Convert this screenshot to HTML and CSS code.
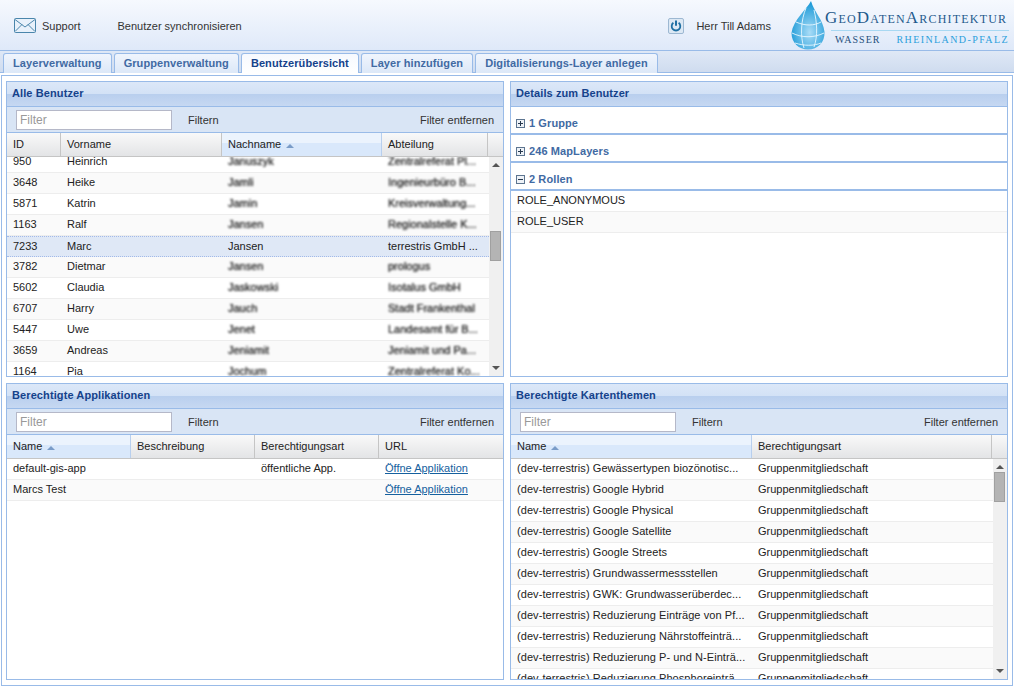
FILE: index.html
```html
<!DOCTYPE html>
<html lang="de">
<head>
  <meta charset="UTF-8">
  <title>GeoDatenArchitektur</title>
  <link rel="stylesheet" href="styles.css">
</head>
<body>
  <header class="topbar">
    <div class="top-link support">
      <svg class="mail-icon" width="22" height="15" viewBox="0 0 22 15">
        <rect x="0.5" y="0.5" width="21" height="14" rx="1" fill="#e8f1fb" stroke="#4a86ac"/>
        <path d="M1 1.5 L11 9 L21 1.5 M1 13.5 L8 6.5 M21 13.5 L14 6.5" fill="none" stroke="#4a86ac"/>
      </svg>
      <span>Support</span>
    </div>
    <div class="top-link sync">Benutzer synchronisieren</div>
    <div class="top-user">
      <div class="power-btn">
        <svg width="12" height="12" viewBox="0 0 12 12">
          <path d="M3.4 2.8 A4.3 4.3 0 1 0 8.6 2.8" fill="none" stroke="#1f6fa3" stroke-width="1.8"/>
          <path d="M6 0.6 V5.8" stroke="#1f6fa3" stroke-width="2"/>
        </svg>
      </div>
      <span>Herr Till Adams</span>
    </div>
    <div class="logo">
      <svg width="34" height="50" viewBox="0 0 34 50">
        <defs>
          <radialGradient id="drop" cx="0.55" cy="0.65" r="0.6">
            <stop offset="0" stop-color="#a9dcf7"/>
            <stop offset="1" stop-color="#1e9bd8"/>
          </radialGradient>
        </defs>
        <path d="M20 1 C16 9 2 20 0.5 33 C0.5 43 8 49.5 17 49.5 C27 49.5 34 42 33.5 32 C32.5 20 23 12 20 1 Z" fill="url(#drop)"/>
        <path d="M15 8 C10 20 9 36 13 48 M23 10 C26 22 27 36 23 47 M5 22 C14 26 23 26 30 22 M1 33 C11 38 23 38 33 33 M4 43 C13 46 23 46 30 43" fill="none" stroke="#e8f7ff" stroke-width="0.9"/>
      </svg>
      <div class="logo-text">
        <div class="logo-title">GeoDatenArchitektur</div>
        <div class="logo-line"></div>
        <div class="logo-sub">
          <span class="logo-wasser">WASSER</span>
          <span class="logo-rlp">RHEINLAND-PFALZ</span>
        </div>
      </div>
    </div>
  </header>

  <nav class="tabs">
    <div class="tab">Layerverwaltung</div>
    <div class="tab">Gruppenverwaltung</div>
    <div class="tab active">Benutzerübersicht</div>
    <div class="tab">Layer hinzufügen</div>
    <div class="tab">Digitalisierungs-Layer anlegen</div>
  </nav>

  <main class="main">
    <section class="panel">
      <h2 class="panel-title">Alle Benutzer</h2>
      <div class="toolbar">
        <input class="filter" placeholder="Filter">
        <span class="filter-go">Filtern</span>
        <span class="filter-clear">Filter entfernen</span>
      </div>
      <div class="grid-head users-cols">
        <div class="col">ID</div>
        <div class="col">Vorname</div>
        <div class="col sorted">Nachname <i class="sort-arrow"></i></div>
        <div class="col">Abteilung</div>
        <div class="col"></div>
      </div>
      <div class="grid-body">
        <div class="rows scrolled">
          <div class="row users-rows"><span>950</span><span>Heinrich</span><span class="blur">Januszyk</span><span class="blur">Zentralreferat Pl...</span></div>
          <div class="row users-rows"><span>3648</span><span>Heike</span><span class="blur">Jamli</span><span class="blur">Ingenieurbüro B...</span></div>
          <div class="row users-rows"><span>5871</span><span>Katrin</span><span class="blur">Jamin</span><span class="blur">Kreisverwaltung...</span></div>
          <div class="row users-rows"><span>1163</span><span>Ralf</span><span class="blur">Jansen</span><span class="blur">Regionalstelle K...</span></div>
          <div class="row users-rows selected"><span>7233</span><span>Marc</span><span>Jansen</span><span>terrestris GmbH ...</span></div>
          <div class="row users-rows"><span>3782</span><span>Dietmar</span><span class="blur">Jansen</span><span class="blur">prologus</span></div>
          <div class="row users-rows"><span>5602</span><span>Claudia</span><span class="blur">Jaskowski</span><span class="blur">Isotalus GmbH</span></div>
          <div class="row users-rows"><span>6707</span><span>Harry</span><span class="blur">Jauch</span><span class="blur">Stadt Frankenthal</span></div>
          <div class="row users-rows"><span>5447</span><span>Uwe</span><span class="blur">Jenet</span><span class="blur">Landesamt für B...</span></div>
          <div class="row users-rows"><span>3659</span><span>Andreas</span><span class="blur">Jeniamit</span><span class="blur">Jeniamit und Pa...</span></div>
          <div class="row users-rows"><span>1164</span><span>Pia</span><span class="blur">Jochum</span><span class="blur">Zentralreferat Ko...</span></div>
        </div>
        <div class="scrollbar">
          <i class="arrow-up"></i>
          <i class="thumb thumb-users"></i>
          <i class="arrow-down"></i>
        </div>
      </div>
    </section>

    <section class="panel">
      <h2 class="panel-title">Details zum Benutzer</h2>
      <div class="acc">
        <svg class="tree-icon" width="9" height="9" viewBox="0 0 9 9"><rect x="0.5" y="0.5" width="8" height="8" fill="#eef2f7" stroke="#5d7590"/><path d="M2 4.5 H7 M4.5 2 V7" stroke="#26384e"/></svg>
        1 Gruppe
      </div>
      <div class="acc">
        <svg class="tree-icon" width="9" height="9" viewBox="0 0 9 9"><rect x="0.5" y="0.5" width="8" height="8" fill="#eef2f7" stroke="#5d7590"/><path d="M2 4.5 H7 M4.5 2 V7" stroke="#26384e"/></svg>
        246 MapLayers
      </div>
      <div class="acc">
        <svg class="tree-icon" width="9" height="9" viewBox="0 0 9 9"><rect x="0.5" y="0.5" width="8" height="8" fill="#eef2f7" stroke="#5d7590"/><path d="M2 4.5 H7" stroke="#26384e"/></svg>
        2 Rollen
      </div>
      <div class="rows">
        <div class="row"><span>ROLE_ANONYMOUS</span></div>
        <div class="row"><span>ROLE_USER</span></div>
      </div>
    </section>

    <section class="panel">
      <h2 class="panel-title">Berechtigte Applikationen</h2>
      <div class="toolbar">
        <input class="filter" placeholder="Filter">
        <span class="filter-go">Filtern</span>
        <span class="filter-clear">Filter entfernen</span>
      </div>
      <div class="grid-head apps-cols">
        <div class="col sorted">Name <i class="sort-arrow"></i></div>
        <div class="col">Beschreibung</div>
        <div class="col">Berechtigungsart</div>
        <div class="col">URL</div>
      </div>
      <div class="grid-body">
        <div class="rows">
          <div class="row apps-cols"><span>default-gis-app</span><span></span><span>öffentliche App.</span><span><a href="#">Öffne Applikation</a></span></div>
          <div class="row apps-cols"><span>Marcs Test</span><span></span><span></span><span><a href="#">Öffne Applikation</a></span></div>
        </div>
      </div>
    </section>

    <section class="panel">
      <h2 class="panel-title">Berechtigte Kartenthemen</h2>
      <div class="toolbar">
        <input class="filter" placeholder="Filter">
        <span class="filter-go">Filtern</span>
        <span class="filter-clear">Filter entfernen</span>
      </div>
      <div class="grid-head themes-cols">
        <div class="col sorted">Name <i class="sort-arrow"></i></div>
        <div class="col">Berechtigungsart</div>
        <div class="col"></div>
      </div>
      <div class="grid-body">
        <div class="rows">
          <div class="row themes-rows"><span>(dev-terrestris) Gewässertypen biozönotisc...</span><span>Gruppenmitgliedschaft</span></div>
          <div class="row themes-rows"><span>(dev-terrestris) Google Hybrid</span><span>Gruppenmitgliedschaft</span></div>
          <div class="row themes-rows"><span>(dev-terrestris) Google Physical</span><span>Gruppenmitgliedschaft</span></div>
          <div class="row themes-rows"><span>(dev-terrestris) Google Satellite</span><span>Gruppenmitgliedschaft</span></div>
          <div class="row themes-rows"><span>(dev-terrestris) Google Streets</span><span>Gruppenmitgliedschaft</span></div>
          <div class="row themes-rows"><span>(dev-terrestris) Grundwassermessstellen</span><span>Gruppenmitgliedschaft</span></div>
          <div class="row themes-rows"><span>(dev-terrestris) GWK: Grundwasserüberdec...</span><span>Gruppenmitgliedschaft</span></div>
          <div class="row themes-rows"><span>(dev-terrestris) Reduzierung Einträge von Pf...</span><span>Gruppenmitgliedschaft</span></div>
          <div class="row themes-rows"><span>(dev-terrestris) Reduzierung Nährstoffeinträ...</span><span>Gruppenmitgliedschaft</span></div>
          <div class="row themes-rows"><span>(dev-terrestris) Reduzierung P- und N-Einträ...</span><span>Gruppenmitgliedschaft</span></div>
          <div class="row themes-rows"><span>(dev-terrestris) Reduzierung Phosphoreinträ...</span><span>Gruppenmitgliedschaft</span></div>
        </div>
        <div class="scrollbar">
          <i class="arrow-up"></i>
          <i class="thumb thumb-themes"></i>
          <i class="arrow-down"></i>
        </div>
      </div>
    </section>
  </main>
</body>
</html>
```

FILE: styles.css
```css
* {
  box-sizing: border-box;
}

html, body {
  height: 100%;
}

body {
  display: flex;
  flex-direction: column;
  height: 686px;
  margin: 0;
  overflow: hidden;
  background: #fff;
  color: #222;
  font-family: "Liberation Sans", Arial, sans-serif;
  font-size: 11px;
}

/* top bar */
.topbar {
  display: flex;
  align-items: center;
  height: 50px;
  padding: 1px 0 0 14px;
  background: linear-gradient(#f6f9fe, #dfe9f9);
  color: #333;
}

.top-link {
  display: flex;
  align-items: center;
}

.mail-icon {
  margin-right: 6px;
}

.sync {
  margin-left: 37px;
}

.top-user {
  display: flex;
  align-items: center;
  margin-left: auto;
}

.power-btn {
  display: flex;
  align-items: center;
  justify-content: center;
  width: 16px;
  height: 16px;
  margin-right: 12px;
  border: 1px solid #9db8d2;
  border-radius: 2px;
  background: #dce8f4;
}

.logo {
  display: flex;
  align-items: center;
  margin: -1px 5px 0 20px;
}

.logo-text {
  width: 184px;
  padding-top: 2px;
  font-family: "Liberation Serif", serif;
}

.logo-title {
  color: #1f5a8c;
  font-size: 17px;
  font-variant: small-caps;
  letter-spacing: 1.2px;
  line-height: 20px;
  white-space: nowrap;
}

.logo-line {
  height: 1px;
  margin: 2px 0 0 6px;
  background: #a8d8f2;
}

.logo-sub {
  display: flex;
  justify-content: space-between;
  padding: 3px 0 0 10px;
  font-size: 10px;
  letter-spacing: 1px;
}

.logo-wasser {
  color: #1f4f7c;
}

.logo-rlp {
  color: #2ba0dc;
  letter-spacing: 1.4px;
}

/* tabs */
.tabs {
  display: flex;
  align-items: flex-end;
  gap: 2px;
  height: 23px;
  padding-left: 3px;
  border-top: 1px solid #99bbe8;
  border-bottom: 1px solid #99bbe8;
  background: linear-gradient(#dfe8f6, #cfdcef);
}

.tab {
  height: 20px;
  margin-bottom: -1px;
  padding: 0 9px;
  border: 1px solid #99bbe8;
  border-bottom: 0;
  border-radius: 3px 3px 0 0;
  background: linear-gradient(#f0f5fd, #dce8f8);
  color: #416aa3;
  font-weight: bold;
  letter-spacing: 0.08px;
  line-height: 19px;
}

.tab.active {
  background: linear-gradient(#f6f9fe, #fff);
  color: #15428b;
}

/* main area */
.main {
  display: grid;
  grid-template-columns: 498px 498px;
  grid-template-rows: 296px 297px;
  gap: 6px;
  height: 611px;
  margin: 2px 0 0 1px;
  padding: 5px 4px 4px;
  width: 1012px;
  border: 1px solid #99bbe8;
}

.panel {
  display: flex;
  flex-direction: column;
  overflow: hidden;
  border: 1px solid #99bbe8;
  background: #fff;
}

.panel-title {
  flex: none;
  height: 25px;
  margin: 0;
  padding-left: 5px;
  border-bottom: 1px solid #99bbe8;
  background: linear-gradient(#dce8f8 0, #d3e2f6 48%, #b9cfee 52%, #c6d8f2 100%);
  color: #15428b;
  font-size: 11px;
  font-weight: bold;
  letter-spacing: 0.1px;
  line-height: 22px;
}

.toolbar {
  display: flex;
  flex: none;
  align-items: center;
  height: 26px;
  padding: 0 9px;
  border-bottom: 1px solid #99bbe8;
  background: #d9e5f5;
  color: #333;
}

.filter {
  width: 156px;
  height: 20px;
  padding: 0 3px;
  border: 1px solid #b5b8c8;
  background: #fff;
  font-family: inherit;
  font-size: 12px;
}

.filter::placeholder {
  color: #999;
}

.filter-go {
  margin-left: 16px;
}

.filter-clear {
  margin-left: auto;
}

/* grids */
.grid-head {
  display: grid;
  flex: none;
  height: 24px;
  border-bottom: 1px solid #c5c5c5;
}

.users-cols {
  grid-template-columns: 54px 161px 160px 106px 1fr;
}

.apps-cols {
  grid-template-columns: 124px 124px 124px 1fr;
}

.themes-cols {
  grid-template-columns: 241px 240px 1fr;
}

.col {
  padding-left: 6px;
  border-right: 1px solid #c5c5c5;
  background: linear-gradient(#f9f9f9, #e3e4e6);
  line-height: 23px;
}

.col:last-child {
  border-right: 0;
}

.col.sorted {
  border-right-color: #b8cfee;
  background: linear-gradient(#ebf3fd 0, #ebf3fd 45%, #d9e8fb 45%, #d9e8fb 100%);
}

.sort-arrow {
  display: inline-block;
  width: 0;
  height: 0;
  margin-left: 2px;
  border: 4px solid transparent;
  border-top: 0;
  border-bottom: 4px solid #7a9cc8;
}

.grid-body {
  display: flex;
  flex: 1;
  min-height: 0;
}

.rows {
  flex: 1;
  min-width: 0;
  overflow: hidden;
}

.scrolled .row:first-child {
  margin-top: -5px;
}

.row {
  display: grid;
  align-items: center;
  height: 21px;
  padding-bottom: 2px;
  border-bottom: 1px solid #ededed;
  background: #fff;
  white-space: nowrap;
}

.row:nth-child(even) {
  background: #fafafa;
}

.row span {
  overflow: hidden;
  padding-left: 6px;
}

.users-rows {
  grid-template-columns: 54px 161px 160px 1fr;
}

.themes-rows {
  grid-template-columns: 241px 1fr;
}

.themes-rows span:first-child {
  letter-spacing: 0.07px;
}

.row.selected {
  border-top: 1px dotted #a3bae9;
  border-bottom: 1px dotted #a3bae9;
  background: #dfe8f6;
}

.blur {
  filter: blur(1.2px);
  color: #333;
  text-shadow: 0 0 1px #333;
}

a {
  color: #15609e;
}

/* scrollbar */
.scrollbar {
  position: relative;
  flex: none;
  width: 14px;
  background: #f0f0f0;
}

.thumb {
  position: absolute;
  left: 1px;
  width: 11px;
  height: 30px;
  border: 1px solid #a0a0a0;
  background: #b4b4b4;
}

.thumb-users {
  top: 74px;
}

.thumb-themes {
  top: 13px;
}

.arrow-up,
.arrow-down {
  position: absolute;
  left: 3px;
  width: 0;
  height: 0;
  border: 4px solid transparent;
}

.arrow-up {
  top: 6px;
  border-top: 0;
  border-bottom: 4px solid #555;
}

.arrow-down {
  bottom: 6px;
  border-bottom: 0;
  border-top: 4px solid #555;
}

/* details accordion */
.acc {
  display: flex;
  flex: none;
  align-items: center;
  height: 28px;
  padding: 6px 0 0 5px;
  border-bottom: 2px solid #99bbe8;
  color: #416aa3;
  font-weight: bold;
  letter-spacing: 0.1px;
}

.tree-icon {
  margin-right: 4px;
}
```
